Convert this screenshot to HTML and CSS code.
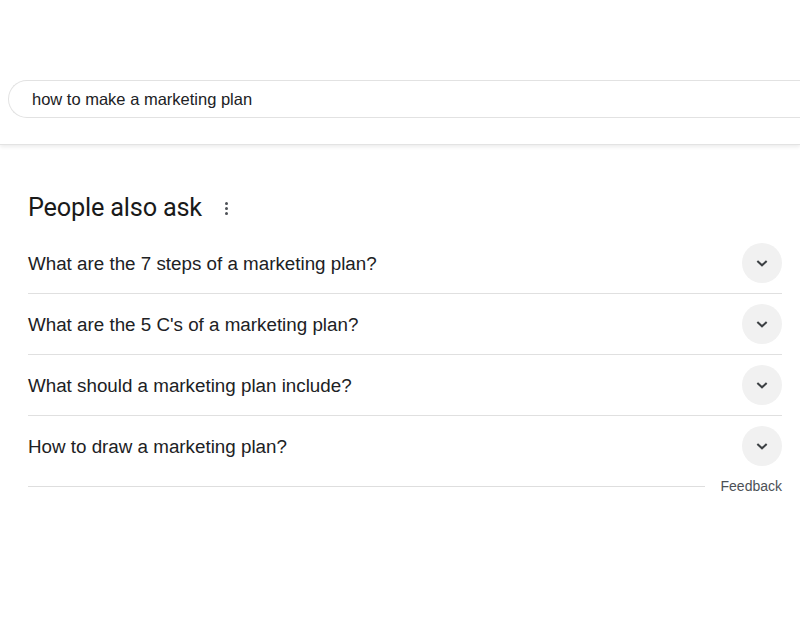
FILE: index.html
```html
<!DOCTYPE html>
<html>
<head>
<meta charset="utf-8">
<link rel="stylesheet" href="styles.css">
</head>
<body>
<header class="header">
  <div class="search">how to make a marketing plan</div>
</header>
<main class="paa">
  <div class="paa-title">
    <h2>People also ask</h2>
    <span class="dots"><i></i><i></i><i></i></span>
  </div>
  <div class="q">
    <span class="q-text">What are the 7 steps of a marketing plan?</span>
    <span class="chev"><svg width="16" height="16" viewBox="0 0 24 24"><path d="M5 9l7 6.5 7-6.5" fill="none" stroke="#3c4043" stroke-width="3"/></svg></span>
  </div>
  <div class="q">
    <span class="q-text">What are the 5 C's of a marketing plan?</span>
    <span class="chev"><svg width="16" height="16" viewBox="0 0 24 24"><path d="M5 9l7 6.5 7-6.5" fill="none" stroke="#3c4043" stroke-width="3"/></svg></span>
  </div>
  <div class="q">
    <span class="q-text">What should a marketing plan include?</span>
    <span class="chev"><svg width="16" height="16" viewBox="0 0 24 24"><path d="M5 9l7 6.5 7-6.5" fill="none" stroke="#3c4043" stroke-width="3"/></svg></span>
  </div>
  <div class="q last">
    <span class="q-text">How to draw a marketing plan?</span>
    <span class="chev"><svg width="16" height="16" viewBox="0 0 24 24"><path d="M5 9l7 6.5 7-6.5" fill="none" stroke="#3c4043" stroke-width="3"/></svg></span>
  </div>
  <div class="footer">
    <span class="rule"></span>
    <span class="feedback">Feedback</span>
  </div>
</main>
</body>
</html>
```

FILE: styles.css
```css
html, body {
  margin: 0;
  padding: 0;
  background: #fff;
  font-family: Arial, "Liberation Sans", sans-serif;
  color: #202124;
  overflow: hidden;
}
.header {
  height: 145px;
  box-sizing: border-box;
  padding-top: 80px;
  padding-left: 8px;
  border-bottom: 1px solid #e3e3e3;
  box-shadow: 0 2px 4px rgba(0,0,0,0.08);
  overflow: hidden;
}
.search {
  height: 38px;
  box-sizing: border-box;
  width: 900px;
  border: 1px solid #e2e2e2;
  border-right: none;
  border-radius: 20px 0 0 20px;
  padding-left: 23px;
  line-height: 36px;
  font-size: 16.5px;
  color: #202124;
}
.paa {
  padding: 0 18px 0 28px;
}
.paa-title {
  display: flex;
  align-items: center;
  height: 88px;
  box-sizing: border-box;
  padding-top: 48px;
  padding-bottom: 10px;
}
.paa-title h2 {
  margin: 0;
  font-family: Roboto, Arial, sans-serif;
  font-weight: 400;
  font-size: 25.3px;
  line-height: 30px;
  color: #1a1a1a;
  letter-spacing: -0.2px;
}
.dots {
  display: flex;
  flex-direction: column;
  gap: 2px;
  margin-left: 23px;
}
.dots i {
  width: 3px;
  height: 3px;
  border-radius: 50%;
  background: #4d5156;
}
.q {
  display: flex;
  align-items: center;
  justify-content: space-between;
  height: 61px;
  box-sizing: border-box;
  border-bottom: 1px solid #e0e0e0;
}
.q.last {
  border-bottom: none;
  height: 60px;
}
.q-text {
  font-size: 18.8px;
  color: #202124;
  padding-top: 1px;
}
.chev {
  width: 40px;
  height: 40px;
  border-radius: 50%;
  background: #f1f1f1;
  display: flex;
  align-items: center;
  justify-content: center;
}
.footer {
  display: flex;
  align-items: center;
  gap: 16px;
  height: 20px;
}
.rule {
  flex: 1;
  height: 1px;
  background: #dedede;
}
.feedback {
  font-size: 14px;
  color: #4d5156;
}
```
